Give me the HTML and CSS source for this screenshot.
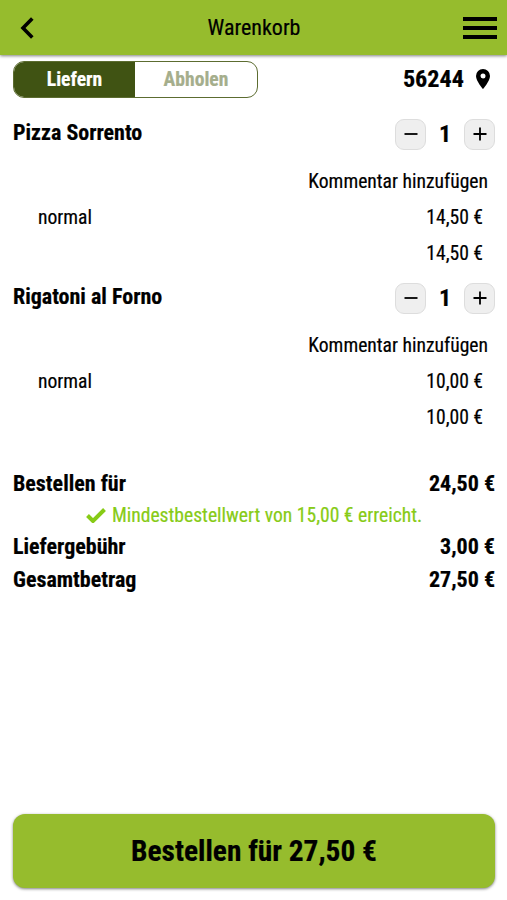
FILE: index.html
```html
<!DOCTYPE html>
<html lang="de">
    <head>
        <meta charset="utf-8">
        <meta name="viewport" content="width=device-width, initial-scale=1">
        <title>Warenkorb</title>
        <link rel="stylesheet" href="styles.css">
    </head>
    <body>
        <header>
            <svg class="back" width="14" height="22" viewBox="0 0 14 22"><path d="M12.3 1.5 3 11l9.300 9.500" /></svg>
            <h1>Warenkorb</h1>
            <div class="menu"><span></span><span></span><span></span></div>
        </header>
        <main>
            <section class="delivery">
                <div class="toggle">
                    <div class="active">Liefern</div>
                    <div>Abholen</div>
                </div>
                <div class="zip">
                    <span>56244</span>
                    <svg width="14" height="20" viewBox="0 0 14 20"><path fill-rule="evenodd" d="M7 0a7 7 0 0 0-7 7c0 5 7 13 7 13s7-8 7-13a7 7 0 0 0-7-7zm0 4.500a2.500 2.500 0 1 1 0 5 2.500 2.500 0 0 1 0-5z" /></svg>
                </div>
            </section>
            <section class="item">
                <div class="item-head">
                    <h2>Pizza Sorrento</h2>
                    <div class="amount">
                        <button><svg width="14" height="14" viewBox="0 0 14 14"><path d="M.5 7h13" /></svg></button>
                        <b>1</b>
                        <button><svg width="14" height="14" viewBox="0 0 14 14"><path d="M.5 7h13M7 .5v13" /></svg></button>
                    </div>
                </div>
                <div class="row comment"><span>Kommentar hinzufügen</span></div>
                <div class="row"><span class="left">normal</span><span>14,50 €</span></div>
                <div class="row"><span>14,50 €</span></div>
            </section>
            <section class="item">
                <div class="item-head">
                    <h2>Rigatoni al Forno</h2>
                    <div class="amount">
                        <button><svg width="14" height="14" viewBox="0 0 14 14"><path d="M.5 7h13" /></svg></button>
                        <b>1</b>
                        <button><svg width="14" height="14" viewBox="0 0 14 14"><path d="M.5 7h13M7 .5v13" /></svg></button>
                    </div>
                </div>
                <div class="row comment"><span>Kommentar hinzufügen</span></div>
                <div class="row"><span class="left">normal</span><span>10,00 €</span></div>
                <div class="row"><span>10,00 €</span></div>
            </section>
            <section class="totals">
                <div class="total"><span>Bestellen für</span><span>24,50 €</span></div>
                <div class="minimum">
                    <svg width="20" height="15" viewBox="0 0 20 15"><path d="M1.500 7.500 7 13 18.500 1.500" /></svg>
                    <span>Mindestbestellwert von 15,00 € erreicht.</span>
                </div>
                <div class="total"><span>Liefergebühr</span><span>3,00 €</span></div>
                <div class="total last"><span>Gesamtbetrag</span><span>27,50 €</span></div>
            </section>
        </main>
        <footer>
            <button class="order">Bestellen für 27,50 €</button>
        </footer>
    </body>
</html>
```

FILE: styles.css
```css
*{
    box-sizing: border-box;
    font-family: 'Roboto Condensed', Roboto, sans-serif;
    font-stretch: 75%;
}
body{
    display: flex;
    flex-direction: column;
    height: 100vh;
    margin: 0;
    background: #FFF;
    color: #000;
    font-size: 19.6px;
    font-weight: 450;
    white-space: nowrap;
    -webkit-text-stroke: 0.2px;
}
h1, h2{
    margin: 0;
}
header{
    display: grid;
    grid-template-columns: 25px 1fr 34px;
    align-items: center;
    height: 55px;
    padding: 0 10px 0 20px;
    background: #96BC2D;
    box-shadow: 0 1px 3px rgba(0, 0, 0, 0.5);
}
h1{
    font-size: 22px;
    font-weight: 450;
    text-align: center;
}
.back{
    fill: none;
    stroke: #000;
    stroke-width: 3.6;
}
.menu{
    display: flex;
    flex-direction: column;
    gap: 5px;
}
.menu span{
    height: 4px;
    background: #000;
}
main{
    flex: 1;
    padding: 6px 12px 0 13px;
}
.delivery{
    display: flex;
    justify-content: space-between;
    align-items: center;
    height: 37px;
    margin-bottom: 18px;
}
.toggle{
    display: flex;
    width: 245px;
    height: 37px;
    border: 1px solid #5C6C30;
    border-radius: 11px;
    overflow: hidden;
    font-weight: bold;
    line-height: 35px;
    text-align: center;
    color: #A5AE8C;
}
.toggle div{
    flex: 1;
}
.toggle .active{
    flex: 0 0 121px;
    background: #405313;
    color: #FFF;
}
.zip{
    display: flex;
    align-items: center;
    gap: 12px;
    padding-right: 5px;
    font-size: 24.2px;
    font-weight: bold;
    line-height: 34px;
}
.zip svg{
    margin-bottom: 2px;
}
.zip span{
    padding-bottom: 2px;
}
.item{
    height: 164px;
}
.item-head{
    display: flex;
    justify-content: space-between;
    height: 36px;
    margin-bottom: 12px;
}
h2{
    font-size: 22px;
    line-height: 33px;
}
.amount{
    display: flex;
    align-items: center;
    font-size: 24px;
}
.amount b{
    width: 38px;
    text-align: center;
}
.amount button{
    display: flex;
    align-items: center;
    justify-content: center;
    width: 31px;
    height: 31px;
    padding: 0;
    border: 1px solid #DDD;
    border-radius: 9px;
    background: #EFEFEF;
}
.amount svg{
    stroke: #000;
    stroke-width: 1.8;
}
.row{
    display: flex;
    justify-content: flex-end;
    height: 36px;
    padding-right: 12px;
    line-height: 36px;
}
.comment{
    padding-right: 7px;
}
.left{
    flex: 1;
    padding-left: 25px;
}
.totals{
    padding-top: 24px;
}
.total{
    display: flex;
    justify-content: space-between;
    height: 32px;
    font-size: 22px;
    font-weight: bold;
    line-height: 32px;
}
.last{
    line-height: 34px;
}
.minimum{
    display: flex;
    align-items: center;
    justify-content: center;
    gap: 6px;
    height: 31px;
    color: #87CB16;
}
.minimum svg{
    fill: none;
    stroke: #87CB16;
    stroke-width: 4;
}
footer{
    padding: 0 12px 12px 13px;
}
.order{
    display: block;
    width: 100%;
    height: 74px;
    padding: 0;
    border: 0;
    border-radius: 12px;
    background: #96BC2D;
    box-shadow: 0 1px 3px rgba(0, 0, 0, 0.5);
    color: #000;
    font-size: 29.4px;
    font-weight: bold;
}
```
